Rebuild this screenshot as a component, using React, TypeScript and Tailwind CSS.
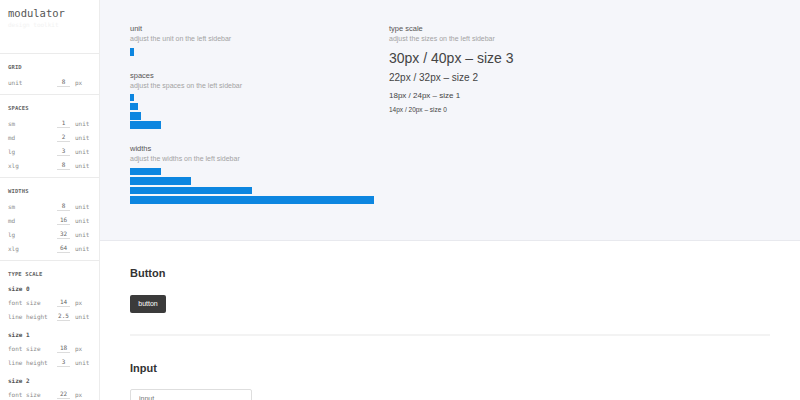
import React from 'react';

const mono = { fontFamily: '"DejaVu Sans Mono", "Liberation Mono", monospace' };

type Row = { label: string; value: string; unit: string };

const SideRow = ({ label, value, unit }: Row) => (
  <div className="flex h-[14px] items-center pl-2 text-[6px] text-[#8a8a8a]">
    <span className="w-[49px]">{label}</span>
    <span className="flex h-[10px] w-[13px] items-center justify-center border-b border-[#dcdcdc] text-[#666]">{value}</span>
    <span className="ml-[5px]">{unit}</span>
  </div>
);

const SideSection = ({ title, children }: { title: string; children: React.ReactNode }) => (
  <div className="border-b border-[#ebebeb] pt-2 pb-[5px]">
    <div className="mb-[3px] h-[10px] pl-2 text-[5.5px] font-bold leading-[10px] tracking-wide text-[#666]">{title}</div>
    {children}
  </div>
);

const SubHead = ({ children }: { children: React.ReactNode }) => (
  <div className="flex h-[14px] items-center pl-2 text-[6px] font-semibold text-[#555]">{children}</div>
);

const Label = ({ title, sub }: { title: string; sub: string }) => (
  <div>
    <div className="h-[10px] text-[7.5px] leading-[10px] text-[#555]">{title}</div>
    <div className="h-[10px] text-[7px] leading-[10px] text-[#a3a3a3]">{sub}</div>
  </div>
);

const Bar = ({ w }: { w: number }) => <div className="h-[7.5px] bg-[#0d86e0]" style={{ width: w }} />;

export default function App() {
  return (
    <div className="flex h-[400px] w-[800px] overflow-hidden bg-white" style={{ fontFamily: '"Liberation Sans", Arial, sans-serif' }}>
      <aside className="w-[100px] shrink-0 border-r border-[#ececec]" style={mono}>
        <div className="h-[54px] border-b border-[#ebebeb] pl-2 pt-[5px]">
          <div className="text-[10.5px] leading-[16px] text-[#555]">modulator</div>
          <div className="text-[6px] leading-[8px] text-[#f2f2f2]">design toolkit</div>
        </div>
        <SideSection title="GRID">
          <SideRow label="unit" value="8" unit="px" />
        </SideSection>
        <SideSection title="SPACES">
          <SideRow label="sm" value="1" unit="unit" />
          <SideRow label="md" value="2" unit="unit" />
          <SideRow label="lg" value="3" unit="unit" />
          <SideRow label="xlg" value="8" unit="unit" />
        </SideSection>
        <SideSection title="WIDTHS">
          <SideRow label="sm" value="8" unit="unit" />
          <SideRow label="md" value="16" unit="unit" />
          <SideRow label="lg" value="32" unit="unit" />
          <SideRow label="xlg" value="64" unit="unit" />
        </SideSection>
        <div className="pt-2">
          <div className="mb-[2px] h-[10px] pl-2 text-[5.5px] font-bold leading-[10px] tracking-wide text-[#666]">TYPE SCALE</div>
          <SubHead>size 0</SubHead>
          <SideRow label="font size" value="14" unit="px" />
          <SideRow label="line height" value="2.5" unit="unit" />
          <div className="h-1" />
          <SubHead>size 1</SubHead>
          <SideRow label="font size" value="18" unit="px" />
          <SideRow label="line height" value="3" unit="unit" />
          <div className="h-1" />
          <SubHead>size 2</SubHead>
          <SideRow label="font size" value="22" unit="px" />
        </div>
      </aside>

      <main className="flex-1">
        <div className="flex h-[241px] border-b border-[#e8e9ee] bg-[#f5f6fa] pl-[30px] pt-[24px]">
          <div className="w-[259px]">
            <Label title="unit" sub="adjust the unit on the left sidebar" />
            <div className="mt-1">
              <Bar w={4} />
            </div>
            <div className="mt-[15px]">
              <Label title="spaces" sub="adjust the spaces on the left sidebar" />
            </div>
            <div className="mt-[3px] flex flex-col gap-[1.8px]">
              <Bar w={4} />
              <Bar w={8} />
              <Bar w={11} />
              <Bar w={31} />
            </div>
            <div className="mt-[15px]">
              <Label title="widths" sub="adjust the widths on the left sidebar" />
            </div>
            <div className="mt-1 flex flex-col gap-[2px]">
              <Bar w={31} />
              <Bar w={61} />
              <Bar w={122} />
              <Bar w={244} />
            </div>
          </div>
          <div>
            <Label title="type scale" sub="adjust the sizes on the left sidebar" />
            <div className="mt-[5px] text-[14px] leading-[18px] text-[#444]">30px / 40px – size 3</div>
            <div className="mt-[4px] text-[10px] leading-[14px] text-[#444]">22px / 32px – size 2</div>
            <div className="mt-[5px] text-[8px] leading-[11px] text-[#444]">18px / 24px – size 1</div>
            <div className="mt-[4px] text-[6.5px] leading-[9px] text-[#444]">14px / 20px – size 0</div>
          </div>
        </div>

        <div className="px-[30px]">
          <div className="border-b-2 border-[#f3f3f3] pt-[25px] pb-[21px]">
            <div className="mb-[15px] text-[11px] font-bold leading-[14px] text-[#333]">Button</div>
            <button className="block h-[18px] w-[36px] rounded-[2px] bg-[#3b3b3b] text-[7px] text-white">button</button>
          </div>
          <div className="pt-[25px]">
            <div className="mb-[14px] text-[11px] font-bold leading-[14px] text-[#333]">Input</div>
            <input
              placeholder="input"
              className="block h-[18px] w-[122px] rounded-[2px] border border-[#dedede] px-2 text-[7px] leading-[16px] text-[#555] outline-none placeholder:text-[#777]"
            />
          </div>
        </div>
      </main>
    </div>
  );
}
